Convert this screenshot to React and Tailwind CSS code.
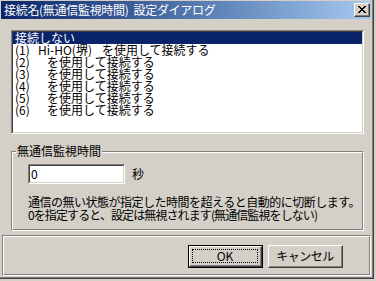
import React from "react";

function Etched({ className = "", innerClassName = "", children }) {
  return (
    <div className={"border-t border-l border-b border-r border-t-[#808080] border-l-[#808080] border-b-white border-r-white " + className}>
      <div className={"h-full border-t border-l border-b border-r border-t-white border-l-white border-b-[#808080] border-r-[#808080] " + innerClassName}>
        {children}
      </div>
    </div>
  );
}

function Button({ label, isDefault }) {
  if (isDefault) {
    return (
      <div className="w-[75px] h-[23px] border border-black">
        <div className="h-full border-t border-l border-b border-r border-t-white border-l-white border-b-[#404040] border-r-[#404040]">
          <div className="h-full border-b border-r border-b-[#808080] border-r-[#808080] p-[2px]">
            <div className="h-full border border-dotted border-black flex items-center justify-center text-[12px] leading-[12px] text-black">
              {label}
            </div>
          </div>
        </div>
      </div>
    );
  }
  return (
    <div className="w-[75px] h-[23px] border-t border-l border-b border-r border-t-white border-l-white border-b-[#404040] border-r-[#404040]">
      <div className="h-full border-b border-r border-b-[#808080] border-r-[#808080] flex items-center justify-center text-[12px] leading-[12px] tracking-[-0.5px] text-black">
        {label}
      </div>
    </div>
  );
}

const rows = [
  { n: "(1)", name: "Hi-HO(堺)" },
  { n: "(2)", name: "" },
  { n: "(3)", name: "" },
  { n: "(4)", name: "" },
  { n: "(5)", name: "" },
  { n: "(6)", name: "" },
];

export default function App() {
  return (
    <div className="w-[376px] h-[281px] bg-[#d4d0c8] font-['Noto_Sans_CJK_JP','Noto_Sans_CJK_SC',sans-serif] text-black select-none">
      <div className="w-[374px] h-[279px] border-r border-b border-r-[#404040] border-b-[#404040]">
        <div className="h-full border-r border-b border-r-[#808080] border-b-[#808080] pt-[1px] pl-[1px] pr-[1px] flex flex-col">
          {/* Title bar */}
          <div className="h-[18px] flex items-center justify-between bg-gradient-to-r from-[#0a246a] to-[#a6caf0]">
            <div className="pl-[3px] flex text-white text-[12px] leading-[12px] tracking-[-0.3px] whitespace-nowrap">
              <span>接続名(無通信監視時間)</span>
              <span className="ml-[5px]">設定ダイアログ</span>
            </div>
            <div className="mr-[1px] w-[16px] h-[14px] bg-[#d4d0c8] border-t border-l border-b border-r border-t-white border-l-white border-b-[#404040] border-r-[#404040]">
              <div className="h-full border-b border-r border-b-[#808080] border-r-[#808080] flex items-center justify-center">
                <svg width="8" height="7" viewBox="0 0 8 7" shapeRendering="crispEdges">
                  <path d="M0 0h2v1h-2zM6 0h2v1h-2zM1 1h2v1h-2zM5 1h2v1h-2zM2 2h4v1h-4zM3 3h2v1h-2zM2 4h4v1h-4zM1 5h2v1h-2zM5 5h2v1h-2zM0 6h2v1h-2zM6 6h2v1h-2z" fill="#000" />
                </svg>
              </div>
            </div>
          </div>

          {/* List box */}
          <div className="ml-[10px] mt-[11px] w-[353px] h-[104px] border-t border-l border-b border-r border-t-[#808080] border-l-[#808080] border-b-white border-r-white">
            <div className="h-full border-t border-l border-b border-r border-t-[#404040] border-l-[#404040] border-b-[#d4d0c8] border-r-[#d4d0c8] bg-white flex flex-col">
              <div className="h-[12px] bg-[#0a246a] text-white text-[12px] leading-[12px] pl-[2px] whitespace-nowrap">
                接続しない
              </div>
              {rows.map((r) => (
                <div key={r.n} className="h-[12px] flex text-[12px] leading-[12px] pl-[2px] whitespace-nowrap">
                  <span className="w-[23px]">{r.n}</span>
                  {r.name ? <span>{r.name}</span> : null}
                  <span className={r.name ? "ml-[10px]" : "ml-[9px]"}>を使用して接続する</span>
                </div>
              ))}
            </div>
          </div>

          {/* Group box */}
          <div className="relative ml-[10px] mt-[17px] w-[353px] h-[80px]">
            <Etched className="h-full" innerClassName="pl-[15px] pt-[11px]">
              <div className="flex items-center">
                <div className="w-[97px] h-[20px] border-t border-l border-b border-r border-t-[#808080] border-l-[#808080] border-b-white border-r-white">
                  <div className="h-full border-t border-l border-b border-r border-t-[#404040] border-l-[#404040] border-b-[#d4d0c8] border-r-[#d4d0c8] bg-white pl-[1px] flex items-center text-[12px] leading-[12px]">
                    0
                  </div>
                </div>
                <span className="ml-[7px] text-[12px] leading-[12px]">秒</span>
              </div>
              <div className="mt-[11px] text-[12px] leading-[13px] whitespace-nowrap">
                <div className="tracking-[-0.5px]">通信の無い状態が指定した時間を超えると自動的に切断します。</div>
                <div className="tracking-[-0.9px]">0を指定すると、設定は無視されます(無通信監視をしない)</div>
              </div>
            </Etched>
            <span className="absolute left-[5px] top-[-6px] px-[1px] bg-[#d4d0c8] text-[12px] leading-[12px] whitespace-nowrap">
              無通信監視時間
            </span>
          </div>

          {/* Button panel */}
          <Etched className="ml-[1px] mt-[4px] w-[369px] h-[41px]" innerClassName="flex justify-end items-start pt-[8px] pr-[26px] gap-[5px]">
            <Button label="OK" isDefault />
            <Button label="キャンセル" />
          </Etched>
        </div>
      </div>
    </div>
  );
}
